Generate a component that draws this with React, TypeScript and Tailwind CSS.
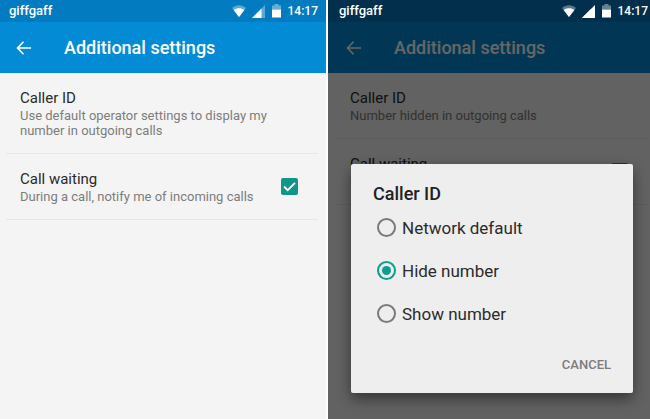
import { useState } from "react";
import clsx from "clsx";

const WifiIcon = () => (
  <svg viewBox="0 0 14 12" className="h-3 w-3.5" aria-hidden="true">
    <path d="M0 3C4-0.6 10-0.6 14 3L7 12Z" fill="#fff" fillOpacity="0.35" />
    <path d="M1.600 5C4.500 2.600 9.500 2.600 12.400 5L7 12Z" fill="#fff" />
  </svg>
);

const SignalIcon = ({ full }: { full?: boolean }) => (
  <svg viewBox="0 0 13 13" className="h-[13px] w-[13px]" aria-hidden="true">
    <path d="M13 0V13H0Z" fill="#fff" fillOpacity={full ? 1 : 0.35} />
    <path d="M9.5 3.5V13H0Z" fill="#fff" />
  </svg>
);

const BatteryIcon = () => (
  <svg viewBox="0 0 9 14" className="h-3.5 w-[9px]" aria-hidden="true">
    <path d="M2.5 0H6.500V1.500H9V5.500H0V1.500H2.500Z" fill="#fff" fillOpacity="0.4" />
    <path d="M0 5.500H9V13.500H0Z" fill="#fff" />
  </svg>
);

const StatusBar = ({ dimmed }: { dimmed?: boolean }) => (
  <div
    className={clsx(
      "flex h-[22px] items-center text-white",
      dimmed ? "bg-[#02304c] pl-[11px] pr-[2px]" : "bg-[#027bc0] pl-[9px] pr-2"
    )}
  >
    <span className="flex-1 text-[13px] leading-5 font-medium">giffgaff</span>
    <WifiIcon />
    <span className="ml-1.5">
      <SignalIcon full={dimmed} />
    </span>
    <span className="mx-[7px]">
      <BatteryIcon />
    </span>
    <span className="text-xs leading-5 font-medium">14:17</span>
  </div>
);

const AppBar = ({ className }: { className: string }) => (
  <header className={clsx("flex h-[51px] items-center bg-[#038bd5] text-white", className)}>
    <button type="button" aria-label="Back">
      <svg viewBox="0 0 16 14" className="h-3.5 w-4" fill="none" stroke="#fff" strokeWidth="1.6" aria-hidden="true">
        <path d="M7.500 0.800L1.500 7L7.500 13.200M1.700 7H15" />
      </svg>
    </button>
    <h1 className="ml-8 text-lg leading-6 font-medium">Additional settings</h1>
  </header>
);

type SettingsProps = {
  id: string;
  callerId: string;
  defaultWaiting?: boolean;
  className: string;
};

const Settings = ({ id, callerId, defaultWaiting = false, className }: SettingsProps) => {
  const [waiting, setWaiting] = useState(defaultWaiting);

  return (
    <div className={className}>
      <div className="border-b border-[#e6e6e6] px-3.5 py-[15px]">
        <h2 className="text-[15px] leading-5 text-[#2b2b2b]">Caller ID</h2>
        <p className="max-w-[260px] text-[13px] leading-[15px] text-[#7d7d7d]">{callerId}</p>
      </div>
      <div className="flex items-center border-b border-[#e6e6e6] px-3.5 py-[15px]">
        <label htmlFor={id} className="flex-1">
          <span className="block text-[15px] leading-5 text-[#2b2b2b]">Call waiting</span>
          <span className="block text-[13px] leading-[15px] text-[#7d7d7d]">
            During a call, notify me of incoming calls
          </span>
        </label>
        <span className="relative mr-1.5 flex">
          <input
            id={id}
            type="checkbox"
            checked={waiting}
            onChange={(e) => setWaiting(e.target.checked)}
            className="peer h-[17px] w-[17px] appearance-none rounded-xs border-2 border-[#757575] checked:border-[#0f9688] checked:bg-[#0f9688]"
          />
          <svg
            viewBox="0 0 17 17"
            className="pointer-events-none invisible absolute inset-0 peer-checked:visible"
            fill="none"
            stroke="#fff"
            strokeWidth="1.8"
            aria-hidden="true"
          >
            <path d="M3 8.500L6.700 12.200L14 4.800" />
          </svg>
        </span>
      </div>
    </div>
  );
};

const options = ["Network default", "Hide number", "Show number"];

const CallerIdDialog = () => {
  const [selected, setSelected] = useState("Hide number");

  return (
    <div className="absolute inset-0 bg-black/60 pt-[142px] pr-[17px] pl-[23px]">
      <div
        role="dialog"
        aria-labelledby="dialog-title"
        className="rounded-xs bg-[#eeeeee] px-[22px] pt-[18px] pb-[18px] shadow-[0_6px_14px_rgba(0,0,0,0.45)]"
      >
        <h2 id="dialog-title" className="text-lg leading-6 font-medium text-[#222]">
          Caller ID
        </h2>
        <div className="pl-1">
          {options.map((option) => (
            <label key={option} className="flex h-[43px] items-center gap-1.5 text-[17px] leading-6 text-[#2b2b2b]">
              <span className="relative flex">
                <input
                  type="radio"
                  name="caller-id"
                  checked={selected === option}
                  onChange={() => setSelected(option)}
                  className="peer h-[19px] w-[19px] appearance-none rounded-full border-2 border-[#7a7a7a] checked:border-[#0f9d8f]"
                />
                <span className="pointer-events-none invisible absolute inset-[5px] rounded-full bg-[#0f9d8f] peer-checked:visible" />
              </span>
              {option}
            </label>
          ))}
        </div>
        <div className="mt-5 flex justify-end">
          <button type="button" className="text-[13px] leading-5 font-medium text-[#7c7c7c]">
            CANCEL
          </button>
        </div>
      </div>
    </div>
  );
};

export default function App() {
  return (
    <main className="grid min-h-screen grid-cols-[326fr_322fr] gap-0.5 bg-white font-['Roboto',sans-serif]">
      <section className="bg-[#f4f4f4]">
        <StatusBar />
        <AppBar className="pl-4" />
        <Settings
          id="waiting-left"
          callerId="Use default operator settings to display my number in outgoing calls"
          defaultWaiting
          className="pr-2 pl-1.5"
        />
      </section>

      <section className="flex flex-col overflow-hidden bg-[#f4f4f4]">
        <StatusBar dimmed />
        <div className="relative flex-1">
          <AppBar className="pl-[18px]" />
          <Settings id="waiting-right" callerId="Number hidden in outgoing calls" className="pr-0.5 pl-2" />
          <CallerIdDialog />
        </div>
      </section>
    </main>
  );
}
